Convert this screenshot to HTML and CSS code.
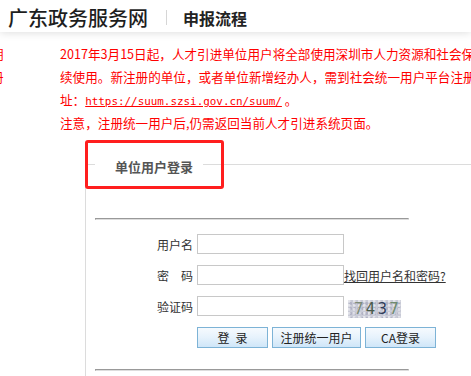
FILE: index.html
```html
<!DOCTYPE html>
<html lang="zh-CN">
<head>
<meta charset="utf-8">
<title>申报流程</title>
<link rel="stylesheet" href="styles.css">
</head>
<body>
<header class="topbar">
  <span class="site-name">广东政务服务网</span>
  <span class="divider"></span>
  <span class="page-name">申报流程</span>
</header>

<div class="notice">
  <div class="side">
    <div class="side-line">期</div>
    <div class="side-line">册</div>
  </div>
  <div class="msg">
    <div class="msg-line">2017年3月15日起，人才引进单位用户将全部使用深圳市人力资源和社会保障局统一用户平台账号，原有账号停止继</div>
    <div class="msg-line">续使用。新注册的单位，或者单位新增经办人，需到社会统一用户平台注册账号，地</div>
    <div class="msg-line">址：<a class="url" href="#">https://suum.szsi.gov.cn/suum/</a> 。</div>
    <div class="msg-line note">注意，注册统一用户后,仍需返回当前人才引进系统页面。</div>
  </div>
</div>

<section class="login">
  <div class="login-head"><span class="login-title">单位用户登录</span></div>
  <div class="highlight"></div>
  <div class="login-body">
    <hr class="rule">
    <form class="login-form">
      <label class="lbl" for="uname">用户名</label>
      <input id="uname" class="field" type="text">
      <span class="extra"></span>

      <label class="lbl" for="upass">密　码</label>
      <input id="upass" class="field" type="password">
      <a class="forgot" href="#">找回用户名和密码?</a>

      <label class="lbl" for="ucode">验证码</label>
      <input id="ucode" class="field" type="text">
      <span class="captcha"><span class="d1">7</span><span class="d2">4</span><span class="d3">3</span><span class="d4">7</span></span>

      <div class="btns">
        <button type="button" class="btn btn-login">登&ensp;录</button>
        <button type="button" class="btn btn-reg">注册统一用户</button>
        <button type="button" class="btn btn-ca">CA登录</button>
      </div>
    </form>
    <hr class="rule rule-bottom">
  </div>
</section>
</body>
</html>
```

FILE: styles.css
```css
html, body {
  margin: 0;
  padding: 0;
}

body {
  width: 471px;
  height: 376px;
  overflow: hidden;
  background: #fff;
  color: #333;
  font-family: "Noto Sans CJK SC", "Noto Sans", sans-serif;
  font-size: 12px;
}

/* header */
.topbar {
  position: relative;
  z-index: 2;
  box-sizing: border-box;
  height: 32px;
  padding: 3px 0 0 8px;
  display: flex;
  align-items: center;
  background: #fff;
  box-shadow: 0 1px 8px rgba(0, 0, 0, 0.13);
}

.site-name {
  font-size: 20px;
  line-height: 24px;
  color: #1e1e1e;
  font-weight: 500;
}

.divider {
  width: 1px;
  height: 15px;
  margin: 0 16px 0 18px;
  background: #d6d6d6;
}

.page-name {
  font-size: 16px;
  line-height: 20px;
  font-weight: bold;
  color: #222;
}

/* notice */
.notice {
  display: flex;
  padding-top: 10px;
  color: #ff0000;
  font-size: 12.6px;
}

.side {
  width: 60px;
  flex-shrink: 0;
}

.side-line {
  margin-left: -9px;
  line-height: 23px;
  white-space: nowrap;
}

.msg-line {
  line-height: 23px;
  white-space: nowrap;
}

.msg-line.note {
  line-height: 19px;
}

.url {
  color: #ff0000;
  text-decoration: underline;
  font-family: "DejaVu Sans Mono", monospace;
  font-size: 10.9px;
}

/* login panel */
.login {
  position: relative;
  margin: 26px 0 0 85px;
  border-left: 1px solid #dcdcdc;
  padding-bottom: 30px;
}

.login-head {
  display: flex;
  height: 24px;
}

.login-head::before,
.login-head::after {
  content: "";
  margin-top: 6px;
  border-top: 1px solid #dcdcdc;
}

.login-head::before {
  width: 9px;
}

.login-head::after {
  flex: 1;
}

.login-title {
  padding: 0 10px 0 20px;
  font-size: 13px;
  line-height: 18px;
  font-weight: bold;
  color: #555;
}

.highlight {
  position: absolute;
  left: -1px;
  top: -18px;
  box-sizing: border-box;
  width: 139px;
  height: 49px;
  border: 3px solid #ff1e1e;
  border-radius: 3px;
}

.login-body {
  padding-left: 9px;
}

.rule {
  box-sizing: border-box;
  width: 314px;
  height: 2px;
  margin: 36px 0 0 0;
  border-style: solid;
  border-width: 1px;
  border-color: #999 #ddd #ddd #999;
}

.rule-bottom {
  margin-top: 21px;
}

.login-form {
  margin: 14px 0 0 0;
  display: grid;
  grid-template-columns: 102px 147px auto;
  grid-template-rows: 20px 20px 20px 21px;
  row-gap: 11px;
  align-items: center;
}

.lbl {
  padding-right: 4px;
  text-align: right;
  font-size: 12px;
  color: #333;
  white-space: nowrap;
}

.field {
  box-sizing: border-box;
  width: 147px;
  height: 20px;
  margin: 0;
  padding: 0 3px;
  border: 1px solid #c8c8c8;
  background: #fff;
  font: 12px "Noto Sans CJK SC", sans-serif;
}

.forgot {
  color: #333;
  font-size: 12px;
  line-height: 16px;
  text-decoration: underline;
  white-space: nowrap;
  margin-top: 1px;
}

.captcha {
  align-self: start;
  margin: 4px 0 0 4px;
  box-sizing: border-box;
  width: 53px;
  height: 18px;
  padding-left: 6px;
  font-family: "DejaVu Sans", sans-serif;
  font-size: 15px;
  line-height: 18px;
  letter-spacing: 2.2px;
  white-space: nowrap;
  overflow: hidden;
  background:
    radial-gradient(circle at 20% 30%, rgba(255,255,255,0.5) 0 1px, transparent 2px) 0 0 / 5px 4px,
    radial-gradient(circle at 70% 70%, rgba(150,150,175,0.45) 0 1px, transparent 2px) 0 0 / 4px 5px,
    #c9cbd7;
}

.d1 { color: #7d8c78; }
.d2 { color: #4a5a4b; }
.d3 { color: #2f3c5a; }
.d4 { color: #6f8b6f; }

.btns {
  grid-column: 2 / 4;
  display: flex;
  gap: 4px;
  height: 21px;
}

.btn {
  box-sizing: border-box;
  height: 21px;
  margin: 0;
  padding: 0;
  border: 1px solid #7db3d6;
  background: linear-gradient(#f6fafe 0%, #e6f2fc 50%, #cfe6f8 100%);
  color: #222;
  font: 12px/19px "Noto Sans CJK SC", sans-serif;
  white-space: nowrap;
}

.btn-login { width: 71px; }
.btn-reg { width: 89px; }
.btn-ca { width: 71px; }
```
